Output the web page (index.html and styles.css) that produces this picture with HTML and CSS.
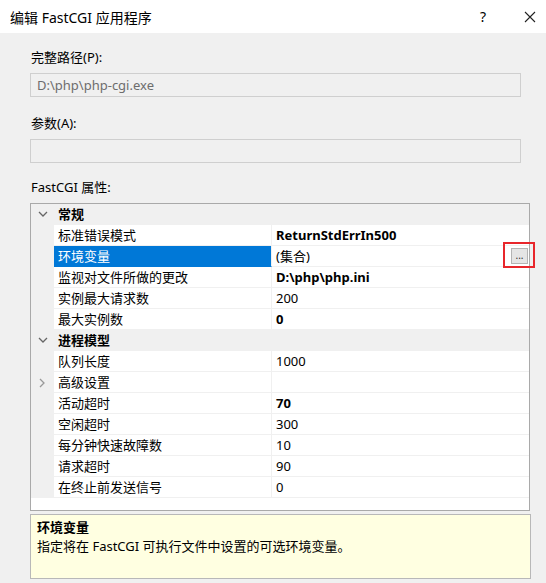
FILE: index.html
```html
<!DOCTYPE html>
<html lang="zh-CN">
<head>
<meta charset="utf-8">
<title>编辑 FastCGI 应用程序</title>
<link rel="stylesheet" href="styles.css">
</head>
<body>
<div class="dialog">
  <div class="titlebar">
    <span class="title">编辑 FastCGI 应用程序</span>
    <span class="tb-help">?</span>
    <span class="tb-close">
      <svg width="12" height="12" viewBox="0 0 12 12"><path d="M1 1 L11 11 M11 1 L1 11" stroke="#222" stroke-width="1.1" fill="none"/></svg>
    </span>
  </div>
  <div class="content">
    <div class="label l1">完整路径(P):</div>
    <div class="input">D:\php\php-cgi.exe</div>
    <div class="label l2">参数(A):</div>
    <div class="input"></div>
    <div class="label l3">FastCGI 属性:</div>
    <div class="grid">
      <div class="row cat">
        <div class="gutter"><svg class="chev" width="10" height="7" viewBox="0 0 10 7"><path d="M1 1 L5 5 L9 1" stroke="#666" stroke-width="1.3" fill="none"/></svg></div>
        <div class="cat-name">常规</div>
      </div>
      <div class="row"><div class="gutter"></div><div class="name">标准错误模式</div><div class="value b">ReturnStdErrIn500</div></div>
      <div class="row sel"><div class="gutter"></div><div class="name">环境变量</div><div class="value">(集合)<span class="dots">...</span></div></div>
      <div class="row"><div class="gutter"></div><div class="name">监视对文件所做的更改</div><div class="value b">D:\php\php.ini</div></div>
      <div class="row"><div class="gutter"></div><div class="name">实例最大请求数</div><div class="value">200</div></div>
      <div class="row"><div class="gutter"></div><div class="name">最大实例数</div><div class="value b">0</div></div>
      <div class="row cat">
        <div class="gutter"><svg class="chev" width="10" height="7" viewBox="0 0 10 7"><path d="M1 1 L5 5 L9 1" stroke="#666" stroke-width="1.3" fill="none"/></svg></div>
        <div class="cat-name">进程模型</div>
      </div>
      <div class="row"><div class="gutter"></div><div class="name">队列长度</div><div class="value">1000</div></div>
      <div class="row"><div class="gutter"><svg class="chev" width="7" height="10" viewBox="0 0 7 10"><path d="M1 1 L5 5 L1 9" stroke="#999" stroke-width="1.3" fill="none"/></svg></div><div class="name">高级设置</div><div class="value"></div></div>
      <div class="row"><div class="gutter"></div><div class="name">活动超时</div><div class="value b">70</div></div>
      <div class="row"><div class="gutter"></div><div class="name">空闲超时</div><div class="value">300</div></div>
      <div class="row"><div class="gutter"></div><div class="name">每分钟快速故障数</div><div class="value">10</div></div>
      <div class="row"><div class="gutter"></div><div class="name">请求超时</div><div class="value">90</div></div>
      <div class="row"><div class="gutter"></div><div class="name">在终止前发送信号</div><div class="value">0</div></div>
    </div>
    <div class="desc">
      <div class="desc-title">环境变量</div>
      <div class="desc-text">指定将在 FastCGI 可执行文件中设置的可选环境变量。</div>
    </div>
  </div>
  <div class="annot"></div>
</div>
</body>
</html>
```
FILE: styles.css
```css
* { box-sizing: border-box; }
html, body { margin: 0; padding: 0; }
body {
  width: 546px;
  height: 583px;
  background: #f0f0f0;
  font-family: "Noto Sans", "Noto Sans CJK SC", sans-serif;
  font-size: 13px;
  color: #000;
  overflow: hidden;
}
.dialog { position: relative; width: 546px; height: 583px; }
.titlebar {
  height: 33px;
  background: #fff;
  display: flex;
  align-items: center;
  padding-left: 10px;
  font-size: 14px;
}
.title { flex: 1; }
.tb-help { width: 40px; text-align: center; font-size: 14px; margin-right: 12px; }
.tb-close { width: 30px; display: flex; justify-content: center; margin-right: 1px; }
.content { padding: 14px 0 0 30px; }
.label { height: 20px; line-height: 20px; padding-left: 1px; }
.input {
  width: 491px;
  height: 24px;
  margin-top: 6px;
  border: 1px solid #cfcfcf;
  background: #f0f0f0;
  color: #6d6d6d;
  line-height: 22px;
  padding-left: 6px;
}
.l2 { margin-top: 16px; }
.l3 { margin-top: 14px; }
.grid {
  width: 500px;
  height: 308px;
  margin-top: 6px;
  border: 1px solid #a9a9a9;
  background: #fff;
}
.row { display: flex; height: 21px; }
.gutter {
  width: 23px;
  background: #f0f0f0;
  display: flex;
  align-items: center;
  justify-content: center;
  flex: none;
}
.name {
  width: 218px;
  flex: none;
  border-bottom: 1px solid #f0f0f0;
  border-right: 1px solid #f0f0f0;
  padding-left: 4px;
  line-height: 20px;
  white-space: nowrap;
}
.value {
  flex: 1;
  border-bottom: 1px solid #f0f0f0;
  padding-left: 4px;
  line-height: 20px;
  display: flex;
  justify-content: space-between;
  align-items: center;
  white-space: nowrap;
}
.b { font-weight: bold; }
.cat { background: #f0f0f0; }
.cat-name { font-weight: bold; line-height: 21px; padding-left: 4px; }
.sel .name { background: #0078d7; color: #fff; border-bottom-color: #0078d7; }
.dots {
  width: 17px;
  height: 16px;
  margin-right: 1px;
  background: #e5e5e5;
  border: 1px solid #b4b4b4;
  font-size: 10px;
  line-height: 12px;
  text-align: center;
  color: #333;
  font-weight: normal;
}
.desc {
  width: 501px;
  height: 65px;
  margin-top: 3px;
  border: 1px solid #b8b8b8;
  background: #ffffe1;
  padding: 3px 6px;
}
.desc-title { font-weight: bold; line-height: 19px; }
.desc-text { line-height: 19px; }
.annot {
  position: absolute;
  left: 503px;
  top: 242px;
  width: 32px;
  height: 26px;
  border: 2px solid #e8262b;
}
```
